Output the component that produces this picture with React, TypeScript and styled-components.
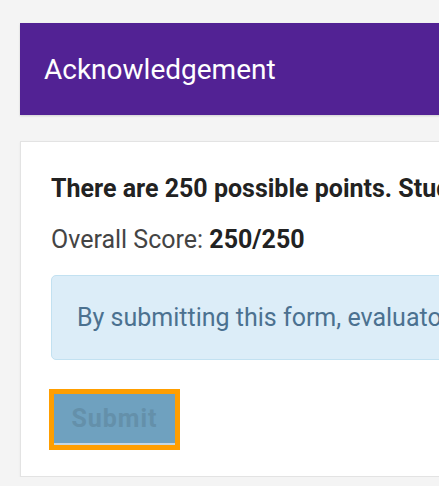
import React from "react";
import styled, { createGlobalStyle } from "styled-components";

const GlobalStyle = createGlobalStyle`
  html, body {
    margin: 0;
    padding: 0;
    background: #f4f4f4;
    overflow: hidden;
  }
  body {
    font-family: Roboto, "Liberation Sans", Arial, sans-serif;
  }
`;

const Page = styled.div`
  width: 900px;
  padding: 23px 0 0 20px;
  box-sizing: border-box;
`;

const Header = styled.div`
  height: 92px;
  background: #522294;
  display: flex;
  align-items: center;
  padding-left: 24px;
  box-shadow: 0 1px 2px rgba(0, 0, 0, 0.15);
`;

const Title = styled.h1`
  margin: 0;
  font-size: 28px;
  font-weight: 400;
  color: #ffffff;
`;

const Card = styled.div`
  margin-top: 26px;
  background: #ffffff;
  border: 1px solid #e3e3e3;
  box-shadow: 0 1px 2px rgba(0, 0, 0, 0.06);
  padding: 30px 30px 31px 30px;
`;

const Lead = styled.p`
  margin: 0;
  font-size: 25px;
  line-height: 34px;
  font-weight: 700;
  color: #222222;
  white-space: nowrap;
`;

const Score = styled.p`
  margin: 17px 0 0 0;
  font-size: 25px;
  line-height: 34px;
  color: #444444;
  white-space: nowrap;

  strong {
    color: #222222;
  }
`;

const Notice = styled.div`
  margin-top: 18px;
  height: 83px;
  display: flex;
  align-items: center;
  padding: 0 25px;
  background: #dcedf8;
  border: 1px solid #c2e1f1;
  border-radius: 5px;
  font-size: 25px;
  color: #4b7190;
  white-space: nowrap;
`;

const Actions = styled.div`
  margin-top: 34px;
  padding-left: 3px;
`;

const SubmitButton = styled.button`
  width: 121px;
  height: 51px;
  padding: 0;
  border: none;
  border-bottom: 2px solid #c5d7e2;
  background: #6fa1bf;
  color: #6490aa;
  font-family: Roboto, "Liberation Sans", Arial, sans-serif;
  font-size: 25px;
  font-weight: 700;
  letter-spacing: 1px;
  outline: 5px solid #ff9e00;
  cursor: not-allowed;
`;

const App: React.FC = () => {
  return (
    <Page>
      <GlobalStyle />
      <Header>
        <Title>Acknowledgement</Title>
      </Header>
      <Card>
        <Lead>
          There are 250 possible points. Students must score at least 175 points to pass.
        </Lead>
        <Score>
          Overall Score: <strong>250/250</strong>
        </Score>
        <Notice>
          By submitting this form, evaluators acknowledge that the scores above are final.
        </Notice>
        <Actions>
          <SubmitButton disabled>Submit</SubmitButton>
        </Actions>
      </Card>
    </Page>
  );
};

export default App;
